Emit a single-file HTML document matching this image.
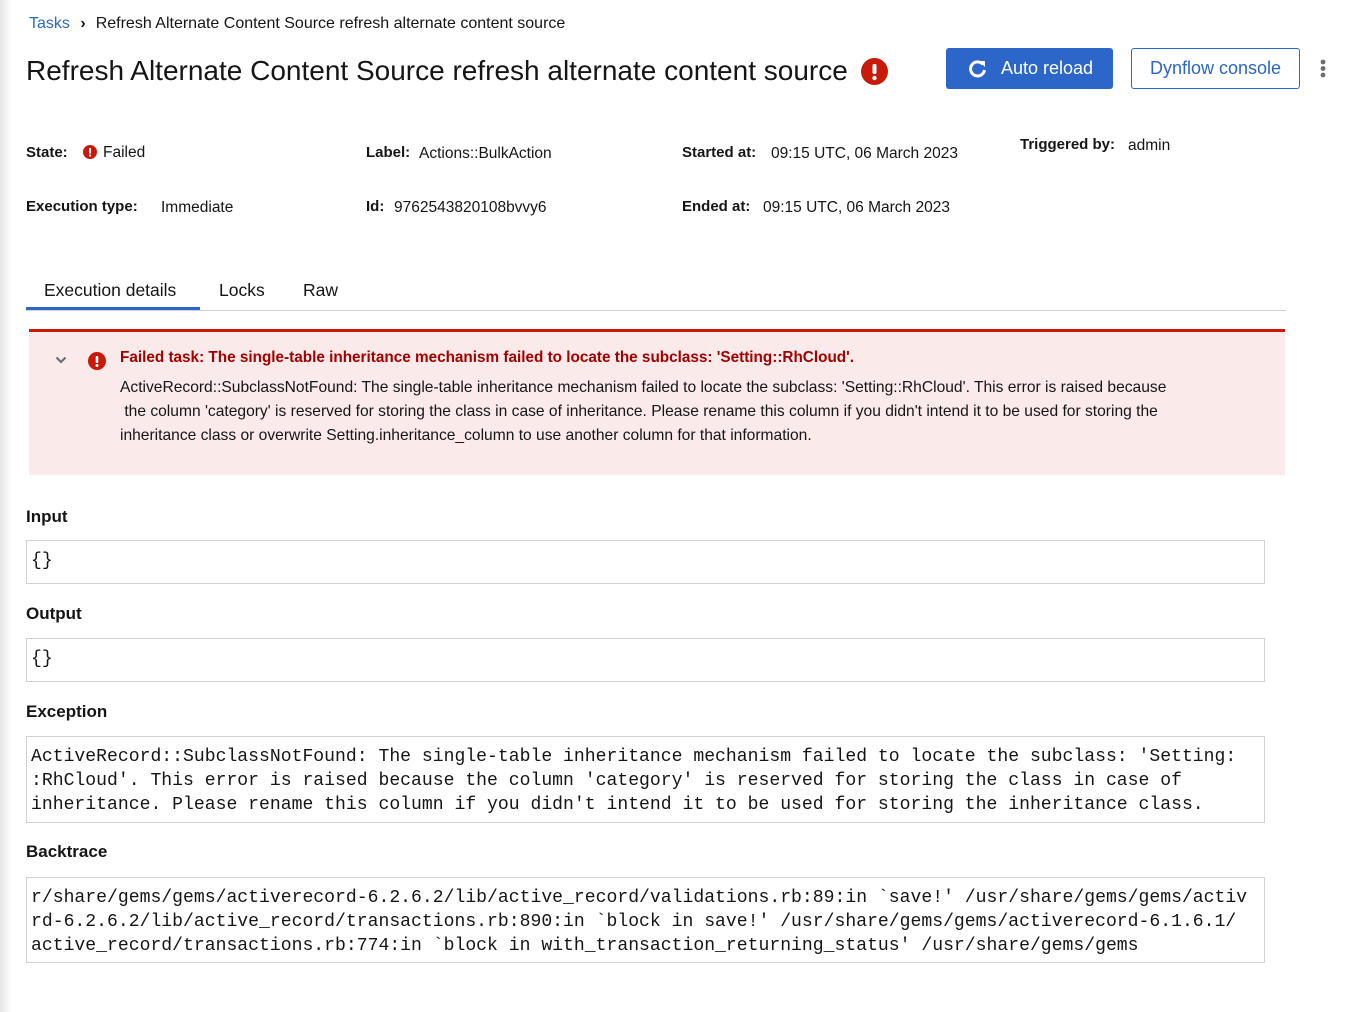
<!DOCTYPE html>
<html><head><meta charset="utf-8"><style>
*{box-sizing:border-box;margin:0;padding:0}
body{width:1356px;height:1012px;background:#fff;font-family:"Liberation Sans",sans-serif;color:#151515;position:relative;overflow:hidden}
.shadow{position:absolute;left:0;top:0;width:12px;height:1012px;background:linear-gradient(to right,#e6e6e6,#fff)}
.abs{position:absolute;white-space:nowrap}
.lbl{font-weight:bold;font-size:15px}
.val{font-size:15.5px}
.box{position:absolute;left:26px;width:1239px;border:1px solid #d2d2d2;font-family:"Liberation Mono",monospace;font-size:18.1px;line-height:24px;color:#151515;padding:8px 4px;white-space:pre;overflow:hidden}
h3{position:absolute;left:26px;font-size:17px;font-weight:bold}
</style></head><body>
<div class="shadow"></div>
<div class="abs" style="left:29px;top:15px;font-size:16px"><span style="color:#2b6bc4">Tasks</span> <span style="display:inline-block;margin:0 10px 0 6px;font-weight:bold">›</span>Refresh Alternate Content Source refresh alternate content source</div>
<div class="abs" style="left:26px;top:55px;font-size:28px">Refresh Alternate Content Source refresh alternate content source</div>
<svg class="abs" style="left:861px;top:58px" width="27" height="27"><circle cx="13.5" cy="13.5" r="13.5" fill="#c9190b"/><rect x="11.5" y="6" width="4" height="10" rx="1.5" fill="#fff"/><circle cx="13.5" cy="20" r="2.2" fill="#fff"/></svg>
<div class="abs" style="left:946px;top:48px;width:167px;height:41px;background:#2b66c8;border-radius:3px;color:#fff;font-size:18px;line-height:41px"><svg style="position:absolute;left:22px;top:11px" width="19" height="19" viewBox="0 0 19 19"><path d="M15 5.5A7 7 0 1 0 16.5 11" fill="none" stroke="#fff" stroke-width="3"/><path d="M11 2h6v6z" fill="#fff"/></svg><span style="position:absolute;left:55px">Auto reload</span></div>
<div class="abs" style="left:1131px;top:48px;width:169px;height:41px;border:1px solid #2b66c8;border-radius:3px;color:#2b66c8;font-size:18px;line-height:39px;text-align:center">Dynflow console</div>
<svg class="abs" style="left:1319px;top:59px" width="8" height="20"><circle cx="4" cy="3" r="2.4" fill="#6a6e73"/><circle cx="4" cy="9.5" r="2.4" fill="#6a6e73"/><circle cx="4" cy="16" r="2.4" fill="#6a6e73"/></svg>

<div class="abs lbl" style="left:26px;top:144px">State:</div>
<svg class="abs" style="left:83px;top:145px" width="14" height="14"><circle cx="7" cy="7" r="7" fill="#c9190b"/><rect x="6" y="3" width="2" height="5.5" fill="#fff"/><circle cx="7" cy="10.5" r="1.1" fill="#fff"/></svg>
<div class="abs val" style="left:103px;top:144px">Failed</div>
<div class="abs lbl" style="left:366px;top:144px">Label:</div><div class="abs val" style="left:419px;top:145px">Actions::BulkAction</div>
<div class="abs lbl" style="left:682px;top:144px">Started at:</div><div class="abs val" style="left:771px;top:145px">09:15 UTC, 06 March 2023</div>
<div class="abs lbl" style="left:1020px;top:136px">Triggered by:</div><div class="abs val" style="left:1128px;top:137px">admin</div>
<div class="abs lbl" style="left:26px;top:198px">Execution type:</div><div class="abs val" style="left:161px;top:199px">Immediate</div>
<div class="abs lbl" style="left:366px;top:198px">Id:</div><div class="abs val" style="left:394px;top:199px">9762543820108bvvy6</div>
<div class="abs lbl" style="left:682px;top:198px">Ended at:</div><div class="abs val" style="left:763px;top:199px">09:15 UTC, 06 March 2023</div>

<div class="abs" style="left:26px;top:310px;width:1260px;height:1px;background:#d2d2d2"></div>
<div class="abs" style="left:44px;top:280px;font-size:17.5px">Execution details</div>
<div class="abs" style="left:26px;top:307px;width:174px;height:3px;background:#2b66c8"></div>
<div class="abs" style="left:219px;top:280px;font-size:17.5px">Locks</div>
<div class="abs" style="left:303px;top:280px;font-size:17.5px">Raw</div>

<div class="abs" style="left:29px;top:329px;width:1256px;height:146px;background:#faeaea;border-top:3px solid #c9190b"></div>
<svg class="abs" style="left:55px;top:356px" width="12" height="9"><path d="M1.5 1.5l4.5 4.5 4.5-4.5" fill="none" stroke="#6a6e73" stroke-width="2.2"/></svg>
<svg class="abs" style="left:88px;top:352px" width="18" height="18"><circle cx="9" cy="9" r="9" fill="#c9190b"/><rect x="7.7" y="4" width="2.6" height="7" rx="1" fill="#fff"/><circle cx="9" cy="13.5" r="1.5" fill="#fff"/></svg>
<div class="abs" style="left:120px;top:349px;font-size:15.3px;font-weight:bold;color:#a30000">Failed task: The single-table inheritance mechanism failed to locate the subclass: 'Setting::RhCloud'.</div>
<div class="abs" style="left:120px;top:376px;font-size:15.6px;line-height:24px">ActiveRecord::SubclassNotFound: The single-table inheritance mechanism failed to locate the subclass: 'Setting::RhCloud'. This error is raised because<br>&nbsp;the column 'category' is reserved for storing the class in case of inheritance. Please rename this column if you didn't intend it to be used for storing the<br>inheritance class or overwrite Setting.inheritance_column to use another column for that information.</div>

<h3 style="top:507px">Input</h3>
<div class="box" style="top:540px;height:44px">{}</div>
<h3 style="top:604px">Output</h3>
<div class="box" style="top:638px;height:44px">{}</div>
<h3 style="top:702px">Exception</h3>
<div class="box" style="top:736px;height:87px;padding-top:8px">ActiveRecord::SubclassNotFound: The single-table inheritance mechanism failed to locate the subclass: 'Setting:
:RhCloud'. This error is raised because the column 'category' is reserved for storing the class in case of
inheritance. Please rename this column if you didn't intend it to be used for storing the inheritance class.</div>
<h3 style="top:842px">Backtrace</h3>
<div class="box" style="top:877px;height:86px;padding-top:8px">r/share/gems/gems/activerecord-6.2.6.2/lib/active_record/validations.rb:89:in `save!' /usr/share/gems/gems/activ
rd-6.2.6.2/lib/active_record/transactions.rb:890:in `block in save!' /usr/share/gems/gems/activerecord-6.1.6.1/
active_record/transactions.rb:774:in `block in with_transaction_returning_status' /usr/share/gems/gems</div>
</body></html>
